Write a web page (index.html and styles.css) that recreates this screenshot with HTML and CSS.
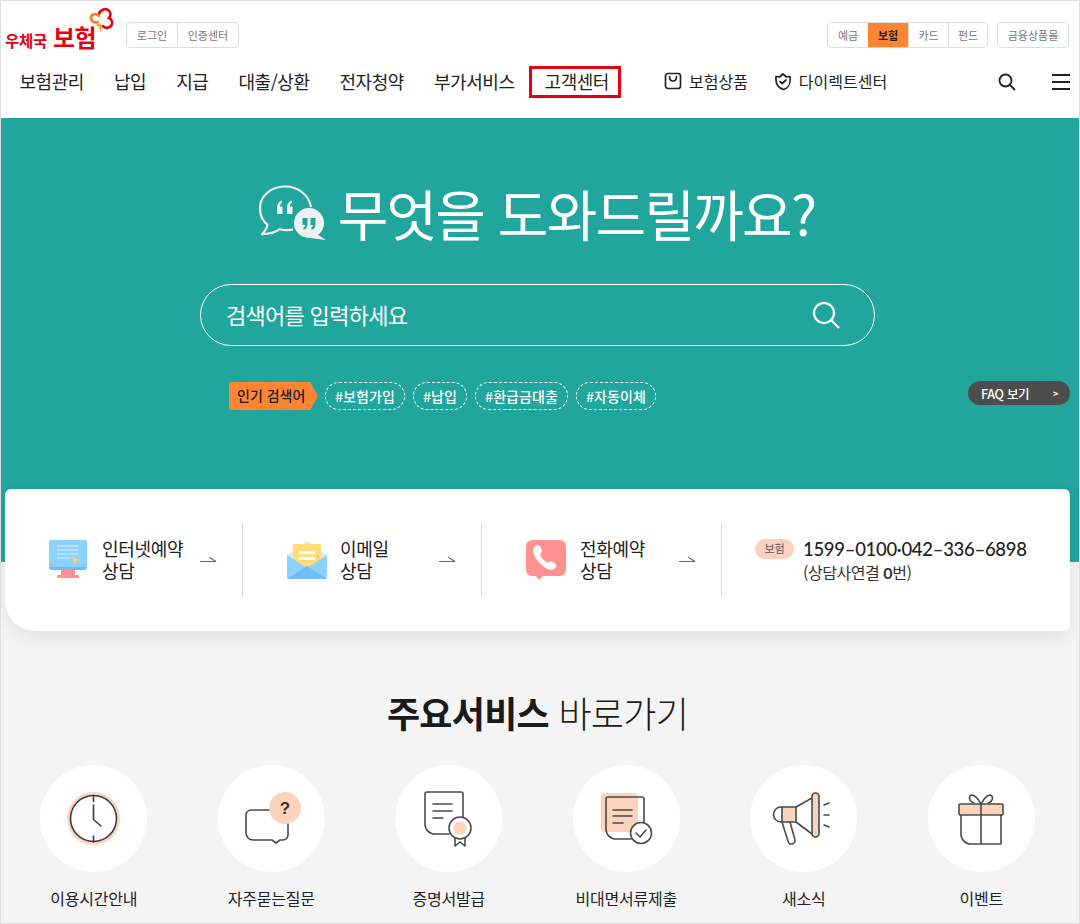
FILE: index.html
```html
<!DOCTYPE html>
<html lang="ko">
<head>
    <meta charset="UTF-8">
    <meta name="viewport" content="width=device-width, initial-scale=1.0">
    <title>우체국 보험 고객센터</title>
    <link rel="stylesheet" href="styles.css">
</head>
<body>
<div class="page">
    <!-- Header -->
    <header class="header">
        <div class="top-row">
            <a href="#" class="logo">
                <span class="logo-small">우체국</span>
                <span class="logo-big">보험</span>
                <svg class="logo-mark" width="26" height="28" viewBox="0 0 26 28" fill="none">
                    <path d="M11 7c1-4 6-6 9-4 3 2 3 5 1 8 3 1 4 5 2 8-2 2-6 3-8 0" stroke="#e60012" stroke-width="2.6" stroke-linecap="round"/>
                    <path d="M11 9C7 5 2 8 3 12c1 3 4 4 7 3" stroke="#f58220" stroke-width="2.6" stroke-linecap="round"/>
                    <path d="M12 16l2 3-1 7-2-6-3-2z" fill="#f9a11b"/>
                </svg>
            </a>
            <div class="btn-group login-group">
                <a href="#" class="btn-item">로그인</a>
                <a href="#" class="btn-item">인증센터</a>
            </div>
            <div class="btn-group service-group">
                <a href="#" class="btn-item">예금</a>
                <a href="#" class="btn-item is-on">보험</a>
                <a href="#" class="btn-item">카드</a>
                <a href="#" class="btn-item">펀드</a>
            </div>
            <div class="btn-group mall-group">
                <a href="#" class="btn-item">금융상품몰</a>
            </div>
        </div>
        <nav class="nav">
            <a href="#" class="nav-link">보험관리</a>
            <a href="#" class="nav-link">납입</a>
            <a href="#" class="nav-link">지급</a>
            <a href="#" class="nav-link">대출/상환</a>
            <a href="#" class="nav-link">전자청약</a>
            <a href="#" class="nav-link">부가서비스</a>
            <a href="#" class="nav-link nav-current">고객센터</a>
            <a href="#" class="nav-link nav-sub nav-shop">
                <svg width="18" height="18" viewBox="0 0 18 18" fill="none" stroke="#222" stroke-width="1.7">
                    <rect x="1.5" y="1.5" width="15" height="15" rx="2.5"/>
                    <path d="M5.5 4.5c0 6 7 6 7 0" stroke-linecap="round"/>
                </svg>
                보험상품
            </a>
            <a href="#" class="nav-link nav-sub nav-direct">
                <svg width="18" height="19" viewBox="0 0 18 19" fill="none" stroke="#222" stroke-width="1.7" stroke-linejoin="round" stroke-linecap="round">
                    <path d="M2 4.500l3.500.5L9 2l3.500 3 3.500-.5c.7 6 .2 11-6.500 13C2.500 15.500 1.400 10.500 2 4.500z"/>
                    <path d="M6 9.500l2.200 2L12 8"/>
                </svg>
                다이렉트센터
            </a>
            <div class="nav-tools">
                <svg class="nav-search" width="18" height="18" viewBox="0 0 18 18" fill="none" stroke="#222" stroke-width="1.8">
                    <circle cx="7.500" cy="7.500" r="6"/>
                    <path d="M12 12l5 5"/>
                </svg>
                <div class="hamburger"><i></i><i></i><i></i></div>
            </div>
        </nav>
    </header>

    <!-- Search area -->
    <section class="hero">
        <h1 class="hero-title">
            <svg width="68" height="55" viewBox="0 0 68 55" fill="none">
                <path d="M34 44.500c-5 1-9 .8-13-.3-5 3.300-11 5-18 5 3-3 5-6 5.500-9.500C4 36.500 1 30 1 23 1 11 12 1.500 26 1.500 39 1.500 50 10 52 22" stroke="#f4f4f4" stroke-width="2.200" stroke-linejoin="round"/>
                <path d="M18 29v-6c0-4 1.500-6.500 5-7.500V18c-1.500.5-2 1.800-2 3.500h2.500V29zM28 29v-6c0-4 1.500-6.500 5-7.500V18c-1.500.5-2 1.800-2 3.500h2.500V29z" fill="#f4f4f4"/>
                <circle cx="50" cy="38" r="15" fill="#f1f1f1"/>
                <path d="M56 48l11 7-16-2z" fill="#f1f1f1"/>
                <path d="M43.500 33h5v5.500c0 3.500-1 5.500-4 6.500v-2.500c1-.5 1.500-1.300 1.500-2.500h-2.500zM51.500 33h5v5.500c0 3.500-1 5.500-4 6.500v-2.500c1-.5 1.500-1.300 1.500-2.500h-2.500z" fill="#20a69c"/>
            </svg>
            <span>무엇을 도와드릴까요?</span>
        </h1>
        <div class="search-box">
            <span class="search-text">검색어를 입력하세요</span>
            <svg width="28" height="28" viewBox="0 0 28 28" fill="none" stroke="#fff" stroke-width="2.200">
                <circle cx="12" cy="12" r="10"/>
                <path d="M19 19l8 8"/>
            </svg>
        </div>
        <div class="keywords">
            <span class="keyword-label">인기 검색어</span>
            <a href="#" class="tag">#보험가입</a>
            <a href="#" class="tag">#납입</a>
            <a href="#" class="tag">#환급금대출</a>
            <a href="#" class="tag">#자동이체</a>
        </div>
        <a href="#" class="faq-link">FAQ 보기 <b>&gt;</b></a>
    </section>

    <main class="content">
        <!-- Counselling card -->
        <div class="card">
            <a href="#" class="card-cell">
                <svg class="card-icon" width="38" height="40" viewBox="0 0 38 40">
                    <path d="M12 30h14v6H12z" fill="#ff9290"/>
                    <rect x="8" y="35" width="22" height="3" rx="1" fill="#ff9290"/>
                    <rect x="0" y="0" width="38" height="30" rx="3" fill="#6fbdf5"/>
                    <path d="M3 0h32a3 3 0 0 1 3 3v24H0V3a3 3 0 0 1 3-3z" fill="#8dd2ff"/>
                    <path d="M8 6h21M8 10h21M8 14h21M8 18h14" stroke="#bfe6ff" stroke-width="1.300"/>
                    <path d="M23 16l8 4-3.500 1-1.500 4z" fill="#ffd25e"/>
                </svg>
                <span class="card-text">인터넷예약<br>상담</span>
                <span class="arrow"></span>
            </a>
            <a href="#" class="card-cell">
                <svg class="card-icon" width="40" height="38" viewBox="0 0 40 38">
                    <path d="M0 14L20 0l20 14v24H0z" fill="#e3e8ec"/>
                    <path d="M6 3h28v17L20 28 6 20z" fill="#ffdc78"/>
                    <path d="M12 10h16v3H12zM12 16h16v3H12z" fill="#fff"/>
                    <path d="M0 14l20 13 20-13v24H0z" fill="#8dd2ff"/>
                    <path d="M0 38l20-13 20 13z" fill="#6fbdf5"/>
                </svg>
                <span class="card-text">이메일<br>상담</span>
                <span class="arrow"></span>
            </a>
            <a href="#" class="card-cell">
                <svg class="card-icon" width="40" height="40" viewBox="0 0 40 40">
                    <path d="M6 0h28a6 6 0 0 1 6 6v24a6 6 0 0 1-6 6H17l-4 4-3-4H6a6 6 0 0 1-6-6V6a6 6 0 0 1 6-6z" fill="#ff9290"/>
                    <path d="M9 6c2-1 4-1 5 0l2 5c0 1-1 2-2 3 1 4 4 7 8 9 1-1 2-2 3-2l5 3c1 2 0 4-2 5-3 2-8 0-12-4-5-4-9-10-9-15 0-2 1-3 2-4z" fill="#fff"/>
                </svg>
                <span class="card-text">전화예약<br>상담</span>
                <span class="arrow"></span>
            </a>
            <div class="card-phone">
                <span class="phone-badge">보험</span>
                <div>
                    <p class="phone-number">1599–0100·042–336–6898</p>
                    <p class="phone-note">(상담사연결 <b>0</b>번)</p>
                </div>
            </div>
        </div>

        <h2 class="section-title"><strong>주요서비스</strong> 바로가기</h2>

        <!-- Service shortcuts -->
        <ul class="service-list">
            <li class="service-item">
                <svg class="service-icon" viewBox="0 0 107 107" fill="none" stroke="#3c3c3c" stroke-width="1.600" stroke-linecap="round" stroke-linejoin="round">
                    <circle cx="53.500" cy="53.500" r="26.500" fill="#fcd3bb" stroke="none"/>
                    <circle cx="53.500" cy="53.500" r="23" fill="#fff"/>
                    <path d="M53.500 30.500v6M53.500 71v6"/>
                    <path d="M53.500 40v14.500l7.500 6.500"/>
                </svg>
                <span class="service-name">이용시간안내</span>
            </li>
            <li class="service-item">
                <svg class="service-icon" viewBox="0 0 107 107" fill="none" stroke="#4a4a4a" stroke-width="1.600" stroke-linejoin="round">
                    <path d="M52 45H33a5 5 0 0 0-5 5v18a7 7 0 0 0 7 7h19l4 3 4-3h3a5 5 0 0 0 5-5V57"/>
                    <circle cx="67" cy="43" r="16" fill="#fcd3bb" stroke="none"/>
                    <text x="67" y="49" class="icon-mark">?</text>
                </svg>
                <span class="service-name">자주묻는질문</span>
            </li>
            <li class="service-item">
                <svg class="service-icon" viewBox="0 0 107 107" fill="none" stroke="#4a4a4a" stroke-width="1.600" stroke-linecap="round" stroke-linejoin="round">
                    <path d="M32 27h34a2 2 0 0 1 2 2v34M54 69H40a10 10 0 0 1-10-10V29a2 2 0 0 1 2-2"/>
                    <path d="M38 39h19M38 46h19M38 53h10"/>
                    <path d="M60 72v9l5-4 5 4v-9"/>
                    <circle cx="65" cy="63" r="11" fill="#fff"/>
                    <circle cx="65" cy="63" r="6.500" fill="#fcd3bb" stroke="none"/>
                </svg>
                <span class="service-name">증명서발급</span>
            </li>
            <li class="service-item">
                <svg class="service-icon" viewBox="0 0 107 107" fill="none" stroke="#4a4a4a" stroke-width="1.600" stroke-linecap="round" stroke-linejoin="round">
                    <rect x="28" y="28" width="37" height="39" rx="4" fill="#fcd3bb" stroke="none"/>
                    <path d="M35 32h34a2 2 0 0 1 2 2v24M58 74H43a10 10 0 0 1-10-10V34a2 2 0 0 1 2-2"/>
                    <path d="M40 45h19M40 51h19M40 58h10"/>
                    <circle cx="68" cy="68" r="10.500" fill="#fff"/>
                    <path d="M63 68l4 4 6-7"/>
                </svg>
                <span class="service-name">비대면서류제출</span>
            </li>
            <li class="service-item">
                <svg class="service-icon" viewBox="0 0 107 107" fill="none" stroke="#4a4a4a" stroke-width="1.600" stroke-linecap="round" stroke-linejoin="round">
                    <path d="M32 42h-1a7.500 7.500 0 0 0 0 15h1"/>
                    <rect x="32" y="42" width="14" height="15" fill="#fcd3bb"/>
                    <path d="M46 42l16-9M46 57l16 12"/>
                    <rect x="62" y="28" width="7" height="44" rx="3.500" fill="#fcd3bb"/>
                    <path d="M32 57l6 19a3.500 3.500 0 0 0 7-1l-5-18"/>
                    <path d="M74 40l5-2M74 50h5M74 60l5 2"/>
                </svg>
                <span class="service-name">새소식</span>
            </li>
            <li class="service-item">
                <svg class="service-icon" viewBox="0 0 107 107" fill="none" stroke="#4a4a4a" stroke-width="1.600" stroke-linecap="round" stroke-linejoin="round">
                    <path d="M53 39c-3-6-8-11-11-8-2 3 1 6 4 7M53 39c3-6 8-11 11-8 2 3-1 6-4 7"/>
                    <rect x="31" y="39" width="44" height="11" rx="1" fill="#fcd3bb"/>
                    <path d="M33 50v19a10 10 0 0 0 10 10h30V50M53 39v40"/>
                </svg>
                <span class="service-name">이벤트</span>
            </li>
        </ul>
    </main>
</div>
</body>
</html>
```

FILE: styles.css
```css
* {
    box-sizing: border-box;
}

body {
    margin: 0;
    font-family: "Noto Sans CJK KR", "Noto Sans", sans-serif;
    color: #222;
}

a {
    color: inherit;
    text-decoration: none;
}

.page {
    position: relative;
    width: 1080px;
    height: 924px;
    border: 1px solid #ddd;
    overflow: hidden;
    background-color: #f4f4f4;
}

/* Header */
.header {
    height: 117px;
    background-color: #fff;
}

.top-row {
    display: flex;
    align-items: flex-start;
    height: 63px;
    padding: 21px 10px 0 4px;
}

.logo {
    position: relative;
    display: flex;
    align-items: baseline;
    width: 121px;
    height: 26px;
    color: #e60012;
    font-weight: 700;
    line-height: 30px;
}

.logo-small {
    font-size: 15.500px;
    letter-spacing: -0.3px;
    margin-right: 6px;
}

.logo-big {
    font-size: 24px;
    letter-spacing: -0.500px;
}

.logo-mark {
    position: absolute;
    left: 83px;
    top: -15px;
}

.btn-group {
    display: flex;
    height: 26px;
    border: 1px solid #ddd;
    border-radius: 4px;
    overflow: hidden;
    font-size: 11px;
    color: #777;
}

.btn-item {
    display: flex;
    align-items: center;
    justify-content: center;
    padding: 0 9px;
    border-left: 1px solid #ddd;
}

.btn-item:first-child {
    border-left: none;
}

.btn-item.is-on {
    background-color: #ff8533;
    border-left: none;
    color: #222;
    font-weight: 700;
}

.login-group .btn-item:first-child {
    width: 50px;
}

.login-group .btn-item:last-child {
    width: 61px;
}

.service-group {
    margin-left: auto;
}

.service-group .btn-item {
    width: 40px;
    padding: 0;
}

.service-group .btn-item:last-child {
    width: 39px;
}

.mall-group {
    margin-left: 9px;
    width: 72px;
}

.mall-group .btn-item {
    width: 100%;
    padding: 0;
}

.nav {
    display: flex;
    align-items: center;
    gap: 30px;
    height: 36px;
    padding: 0 9px 0 18.500px;
}

.nav-link {
    display: flex;
    align-items: center;
    gap: 7px;
    padding-bottom: 2px;
    font-size: 18px;
    letter-spacing: -0.450px;
    line-height: 26px;
}

.nav-current {
    height: 32px;
    margin: 0 -12px 0 -16px;
    padding: 0 9px 2px 13px;
    border: 3px solid #e60012;
}

.nav-sub {
    font-size: 16px;
    letter-spacing: 0;
}

.nav-shop {
    margin-left: 25px;
}

.nav-direct {
    margin-left: -4px;
}

.nav-tools {
    display: flex;
    align-items: center;
    gap: 36px;
    margin-left: auto;
}

.hamburger {
    display: flex;
    flex-direction: column;
    gap: 5px;
    width: 18px;
}

.hamburger i {
    display: block;
    height: 2px;
    background-color: #222;
}

/* Search area */
.hero {
    position: relative;
    height: 444px;
    padding-top: 62px;
    background-color: #20a69c;
    color: #fff;
}

.hero-title {
    display: flex;
    align-items: center;
    justify-content: center;
    gap: 11px;
    height: 64px;
    margin: 0 0 40px;
    padding-right: 6px;
    font-size: 55px;
    font-weight: 400;
    letter-spacing: -1.750px;
    line-height: 64px;
}

.search-box {
    display: flex;
    align-items: center;
    justify-content: space-between;
    width: 675px;
    height: 62px;
    margin-left: 199px;
    padding: 0 34px 0 25px;
    border: 1px solid #fff;
    border-radius: 31px;
}

.search-text {
    padding-bottom: 3px;
    font-size: 22px;
    letter-spacing: -0.700px;
}

.keywords {
    display: flex;
    align-items: center;
    gap: 8px;
    margin-top: 36px;
    padding-left: 228px;
}

.keyword-label {
    position: relative;
    width: 81px;
    height: 28px;
    margin-right: 7px;
    padding-left: 8px;
    background-color: #ff8533;
    border-radius: 3px 0 0 3px;
    color: #222;
    font-size: 14px;
    font-weight: 500;
    line-height: 27px;
    white-space: nowrap;
}

/* point of the label */
.keyword-label::after {
    content: "";
    position: absolute;
    left: 81px;
    top: 0;
    border-left: 8px solid #ff8533;
    border-top: 14px solid transparent;
    border-bottom: 14px solid transparent;
}

.tag {
    display: flex;
    align-items: center;
    height: 28px;
    padding: 0 9px;
    border: 1px dashed #fff;
    border-radius: 14px;
    font-size: 14px;
    font-weight: 500;
    letter-spacing: 0.100px;
}

.faq-link {
    position: absolute;
    right: 9px;
    top: 263px;
    display: flex;
    align-items: center;
    justify-content: space-between;
    width: 102px;
    height: 24px;
    padding: 0 12px 0 13px;
    background-color: #4d4d4d;
    border-radius: 12px;
    font-size: 12.500px;
    font-weight: 500;
    letter-spacing: -0.300px;
}

.faq-link b {
    font-size: 9px;
}

/* Counselling card */
.content {
    padding: 0 9px 0 4px;
}

.card {
    position: relative;
    display: grid;
    grid-template-columns: 238px 239px 240px 1fr;
    align-items: center;
    height: 142px;
    margin-top: -73px;
    background-color: #fff;
    border-radius: 6px 6px 6px 30px;
    box-shadow: 0 6px 18px rgba(0, 0, 0, 0.08);
}

.card-cell {
    display: flex;
    align-items: center;
    height: 72px;
    padding: 0 26px 0 44px;
    border-right: 1px solid #d9d9d9;
}

.card-icon {
    flex: none;
    margin-right: 14px;
}

.card-cell:first-child .card-icon {
    margin-right: 15px;
}

.card-cell:nth-child(2) .card-icon {
    margin-right: 13px;
}

.card-text {
    flex: 1;
    padding-bottom: 2px;
    font-size: 18px;
    letter-spacing: -0.300px;
    line-height: 22px;
}

.arrow {
    position: relative;
    flex: none;
    width: 16px;
    height: 1px;
    margin-top: 2px;
    background-color: #666;
}

.arrow::after {
    content: "";
    position: absolute;
    right: 0;
    top: 0;
    width: 8px;
    height: 1px;
    background-color: #666;
    transform: rotate(32deg);
    transform-origin: right center;
}

.card-phone {
    display: flex;
    align-items: flex-start;
    gap: 9px;
    padding-left: 33px;
}

.phone-badge {
    margin-top: 2px;
    width: 39px;
    height: 20px;
    background-color: #fcd0bf;
    border-radius: 10px;
    color: #555;
    font-size: 11px;
    line-height: 19px;
    text-align: center;
}

.phone-number {
    margin: 0;
    font-family: Lato, "Noto Sans CJK KR", sans-serif;
    font-size: 18.500px;
    font-weight: 500;
    letter-spacing: -0.300px;
    line-height: 24px;
    white-space: nowrap;
}

.phone-note {
    margin: 0;
    color: #333;
    font-size: 16px;
    letter-spacing: -0.450px;
    line-height: 22px;
}

.phone-note b {
    font-family: Lato, sans-serif;
    font-weight: 700;
}

/* Service shortcuts */
.section-title {
    margin: 59px 0 0;
    color: #1a1a1a;
    font-size: 36px;
    font-weight: 300;
    letter-spacing: -0.700px;
    line-height: 44px;
    text-align: center;
}

.section-title strong {
    font-weight: 700;
}

.service-list {
    display: grid;
    grid-template-columns: repeat(6, 1fr);
    margin: 31px 0 0;
    padding: 0;
    list-style: none;
}

.service-item {
    display: flex;
    flex-direction: column;
    align-items: center;
    gap: 15px;
}

.service-icon {
    width: 107px;
    height: 107px;
    background-color: #fff;
    border-radius: 50%;
}

.icon-mark {
    fill: #333;
    stroke: none;
    font-family: "Liberation Sans", sans-serif;
    font-size: 17px;
    font-weight: 700;
    text-anchor: middle;
}

.service-name {
    font-size: 16px;
    letter-spacing: -0.200px;
    line-height: 22px;
}
```
